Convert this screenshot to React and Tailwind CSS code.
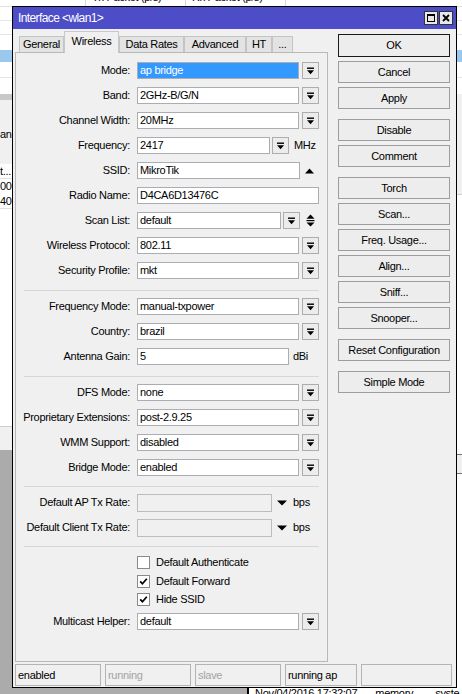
import React from 'react';

const DropIcon = () => (
  <svg width="9" height="8" viewBox="0 0 9 8">
    <rect x="1" y="0.5" width="7" height="1.4" fill="#000" />
    <path d="M1 3.2h7L4.5 7.2z" fill="#000" />
  </svg>
);

const DropBtn = () => (
  <div className="w-[17px] h-[17px] shrink-0 border border-[#adadad] bg-[#ececec] flex items-center justify-center">
    <DropIcon />
  </div>
);

const Field = ({ w, children, selected }) => (
  <div
    className={`h-[17px] shrink-0 border border-[#abadb3] pl-[2px] flex items-center whitespace-nowrap overflow-hidden ${
      selected ? 'bg-[#3399ff] text-white' : 'bg-white'
    }`}
    style={{ width: w }}
  >
    {children}
  </div>
);

const Combo = ({ value, selected }) => (
  <>
    <Field w={162} selected={selected}>{value}</Field>
    <div className="ml-[3px]"><DropBtn /></div>
  </>
);

const Row = ({ label, children }) => (
  <div className="h-[25px] flex items-center">
    <div className="w-[114px] text-right whitespace-nowrap">{label}:</div>
    <div className="ml-[7px] flex items-center">{children}</div>
  </div>
);

// separator between field groups
const Sep = ({ top = 6 }) => (
  <div className={`${top === 7 ? 'pt-[7px]' : 'pt-[6px]'} pb-[3px] px-[8px]`}>
    <div className="h-px bg-[#d6d6d6]" />
  </div>
);

const RateRow = ({ label }) => (
  <Row label={label}>
    <div className="w-[135px] h-[18px] border border-[#bcbcbc] bg-[#f0f0f0]" />
    <svg className="ml-[5px]" width="10" height="6" viewBox="0 0 10 6">
      <path d="M0 0.5h10L5 5.5z" fill="#000" />
    </svg>
    <span className="ml-[6px]">bps</span>
  </Row>
);

const Check = ({ label, checked, short }) => (
  <div className={`${short ? 'h-[18px]' : 'h-[19px]'} flex items-center pl-[121px]`}>
    <div className="w-[13px] h-[13px] border border-[#8a8a8a] bg-white flex items-center justify-center">
      {checked && (
        <svg width="9" height="9" viewBox="0 0 9 9">
          <path d="M1.2 4.4l2.2 2.3 4.4-5" stroke="#000" strokeWidth="1.7" fill="none" />
        </svg>
      )}
    </div>
    <span className="ml-[6px]">{label}</span>
  </div>
);

const Btn = ({ children, def, gap }) => (
  <div
    className={`flex items-center justify-center bg-[#ededed] border ${
      def ? 'h-[23px] border-[#1a1a1a]' : 'h-[22px] border-[#9d9d9d]'
    } ${def ? '' : gap ? 'mt-[10px]' : 'mt-[4px]'}`}
  >
    {children}
  </div>
);

const tabs = [
  { name: 'General', w: 45 },
  { name: 'Wireless', w: 55, active: true },
  { name: 'Data Rates', w: 65 },
  { name: 'Advanced', w: 62 },
  { name: 'HT', w: 26 },
  { name: '...', w: 21 },
];

const StatusCell = ({ w, children, dim }) => (
  <div
    className={`h-[22px] border border-[#b4b4b4] pl-[2px] flex items-center ${dim ? 'text-[#a3a3a3]' : ''}`}
    style={{ width: w }}
  >
    {children}
  </div>
);

export default function App() {
  return (
    <div className="relative w-[462px] h-[694px] overflow-hidden bg-[#ababab] text-[11px] tracking-[-0.3px] text-black font-['Liberation_Sans',Arial,sans-serif]">
      {/* background app */}
      <div className="flex flex-col h-full">
        <div className="h-[7px] bg-white border-b border-[#e0e0e0] flex overflow-hidden">
          <div className="w-[86px] border-r border-[#d8d8d8]" />
          <div className="w-[100px] border-r border-[#d8d8d8] pl-[6px] -mt-[9px] leading-[13px]">Tx Packet (p/s)</div>
          <div className="w-[100px] border-r border-[#d8d8d8] pl-[6px] -mt-[9px] leading-[13px]">Rx Packet (p/s)</div>
        </div>
        <div className="flex flex-1">
          <div className="w-[12px] flex flex-col">
            <div className="h-[14px] bg-white border-b border-[#e6e6e6]" />
            <div className="h-[14px] bg-white border-b border-[#e6e6e6]" />
            <div className="h-[15px] bg-white" />
            <div className="h-[12px] bg-[#99c9ef]" />
            <div className="h-[16px] bg-white border-b border-[#e6e6e6]" />
            <div className="h-[16px] bg-white" />
            <div className="h-[6px] bg-[#c8c8c8]" />
            <div className="h-[64px] bg-[#f0f0f0] pt-[28px] leading-[13px] overflow-hidden">ann</div>
            <div className="h-[15px] bg-white border-b border-[#e0e0e0] leading-[14px]">t...</div>
            <div className="h-[15px] bg-white leading-[14px]">00</div>
            <div className="h-[15px] bg-white border-b border-[#e0e0e0] leading-[14px]">40</div>
            <div className="h-[217px] bg-white" />
            <div className="h-[24px] bg-[#f0f0f0] border-t border-[#d0d0d0]" />
            <div className="flex-1" />
          </div>
          <div className="flex-1" />
          <div className="w-[6px] flex flex-col">
            <div className="h-[14px] bg-white border-b border-[#e6e6e6]" />
            <div className="h-[14px] bg-white border-b border-[#e6e6e6]" />
            <div className="h-[15px] bg-white" />
            <div className="h-[12px] bg-[#99c9ef]" />
            <div className="h-[16px] bg-white border-b border-[#e6e6e6]" />
            <div className="h-[16px] bg-white" />
            <div className="h-[100px] bg-[#f0f0f0]" />
            <div className="h-[260px] bg-white border-t border-[#d0d0d0]" />
            <div className="h-[20px] bg-[#f0f0f0] border-t border-b border-[#707070]" />
            <div className="flex-1 bg-white" />
          </div>
        </div>
        <div className="h-[6px] flex overflow-hidden">
          <div className="w-[249px] border-r-2 border-black" />
          <div className="flex-1 bg-white pl-[6px] whitespace-nowrap leading-[13px] -mt-[1px]">
            Nov/04/2016 17:32:07<span className="ml-[18px]">memory</span><span className="ml-[22px]">syste</span>
          </div>
        </div>
      </div>

      {/* window */}
      <div className="absolute left-[12px] top-[6px] w-[445px] h-[682px] border border-black bg-[#f0f0f0] flex flex-col">
        <div className="h-[22px] bg-[#4d4dc8] flex items-center pl-[5px] pr-[3px]">
          <span className="text-white text-[12px] tracking-[-0.6px]">Interface &lt;wlan1&gt;</span>
          <div className="ml-auto flex gap-[1px]">
            <div className="w-[14px] h-[14px] bg-[#e8e8e8] border border-[#333] flex items-center justify-center">
              <div className="w-[8px] h-[8px] border border-black border-t-2" />
            </div>
            <div className="w-[14px] h-[14px] bg-[#e8e8e8] border border-[#333] flex items-center justify-center">
              <svg width="8" height="8" viewBox="0 0 8 8">
                <path d="M1 1l6 6M7 1L1 7" stroke="#000" strokeWidth="1.8" />
              </svg>
            </div>
          </div>
        </div>

        <div className="flex-1 flex flex-col pl-[2px] pr-[4px] pt-[2px] pb-[1px]">
          <div className="flex flex-1">
            {/* tabs + panel */}
            <div className="w-[313px] flex flex-col">
              <div className="h-[21px] flex items-end pl-[4px]">
                {tabs.map((t) =>
                  t.active ? (
                    <div
                      key={t.name}
                      className="relative z-10 h-[22px] -mb-[1px] bg-[#f0f0f0] border border-b-0 border-[#c8c8c8] flex items-center justify-center pb-[3px]"
                      style={{ width: t.w }}
                    >
                      {t.name}
                    </div>
                  ) : (
                    <div
                      key={t.name}
                      className="h-[16px] bg-[#e3e3e3] border border-b-0 border-[#c4c4c4] flex items-center justify-center"
                      style={{ width: t.w }}
                    >
                      {t.name}
                    </div>
                  )
                )}
              </div>
              <div className="h-[610px] border border-[#b8b8b8] pt-[5px]">
                <Row label="Mode"><Combo value="ap bridge" selected /></Row>
                <Row label="Band"><Combo value="2GHz-B/G/N" /></Row>
                <Row label="Channel Width"><Combo value="20MHz" /></Row>
                <Row label="Frequency">
                  <Field w={133}>2417</Field>
                  <div className="ml-[2px]"><DropBtn /></div>
                  <span className="ml-[5px]">MHz</span>
                </Row>
                <Row label="SSID">
                  <Field w={163}>MikroTik</Field>
                  <svg className="ml-[5px]" width="9" height="6" viewBox="0 0 9 6">
                    <path d="M0 5.5h9L4.5 0.5z" fill="#000" />
                  </svg>
                </Row>
                <Row label="Radio Name"><Field w={182}>D4CA6D13476C</Field></Row>
                <Row label="Scan List">
                  <Field w={144}>default</Field>
                  <div className="ml-[2px]"><DropBtn /></div>
                  <svg className="ml-[6px]" width="9" height="13" viewBox="0 0 9 13">
                    <path d="M0.5 4.8h8L4.5 0.5z" fill="#000" />
                    <rect x="0.5" y="6" width="8" height="1.2" fill="#000" />
                    <path d="M0.5 8.4h8L4.5 12.6z" fill="#000" />
                  </svg>
                </Row>
                <Row label="Wireless Protocol"><Combo value="802.11" /></Row>
                <Row label="Security Profile"><Combo value="mkt" /></Row>
                <Sep top={7} />
                <Row label="Frequency Mode"><Combo value="manual-txpower" /></Row>
                <Row label="Country"><Combo value="brazil" /></Row>
                <Row label="Antenna Gain">
                  <Field w={152}>5</Field>
                  <span className="ml-[4px]">dBi</span>
                </Row>
                <Sep top={7} />
                <Row label="DFS Mode"><Combo value="none" /></Row>
                <Row label="Proprietary Extensions"><Combo value="post-2.9.25" /></Row>
                <Row label="WMM Support"><Combo value="disabled" /></Row>
                <Row label="Bridge Mode"><Combo value="enabled" /></Row>
                <Sep />
                <RateRow label="Default AP Tx Rate" />
                <RateRow label="Default Client Tx Rate" />
                <Sep />
                <div className="pt-[3px]">
                  <Check label="Default Authenticate" />
                  <Check label="Default Forward" checked short />
                  <Check label="Hide SSID" checked />
                </div>
                <Row label="Multicast Helper"><Combo value="default" /></Row>
              </div>
            </div>

            {/* buttons */}
            <div className="w-[112px] ml-[10px] pt-[3px] flex flex-col">
              <Btn def>OK</Btn>
              <Btn gap={false}>Cancel</Btn>
              <Btn>Apply</Btn>
              <Btn gap>Disable</Btn>
              <Btn>Comment</Btn>
              <Btn gap>Torch</Btn>
              <Btn>Scan...</Btn>
              <Btn>Freq. Usage...</Btn>
              <Btn>Align...</Btn>
              <Btn>Sniff...</Btn>
              <Btn>Snooper...</Btn>
              <Btn gap>Reset Configuration</Btn>
              <Btn gap>Simple Mode</Btn>
            </div>
          </div>

          {/* status bar */}
          <div className="mt-[2px] flex gap-[4px]">
            <StatusCell w={86}>enabled</StatusCell>
            <StatusCell w={86} dim>running</StatusCell>
            <StatusCell w={86} dim>slave</StatusCell>
            <StatusCell w={72}>running ap</StatusCell>
            <StatusCell w={91} />
          </div>
        </div>
      </div>
    </div>
  );
}
